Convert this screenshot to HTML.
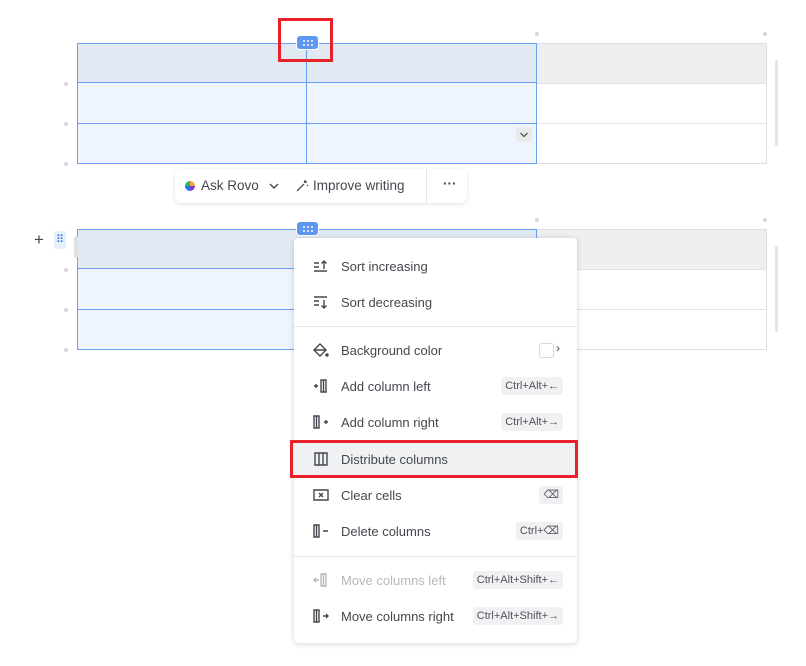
<!DOCTYPE html>
<html><head><style>
body{margin:0;width:806px;height:666px;background:#fff;font-family:"Liberation Sans",sans-serif;position:relative;overflow:hidden}
.a{position:absolute}
.dot{position:absolute;width:4px;height:4px;border-radius:50%;background:#d4d6da}
.mi{position:absolute;left:0;width:283px;height:36px;font-size:13px;color:#44474e}
.mi span.t{position:absolute;left:47px;top:11px}
.mi svg{position:absolute;left:19px;top:10px}
.kb{position:absolute;right:14px;top:9px;height:18px;background:#f0f1f2;border-radius:3px;font-size:11px;color:#505258;line-height:18px;padding:0 4px}
.hd{position:absolute;width:23px;height:15px;background:#5d97f0;border-radius:4px;border:1px solid #fff;box-sizing:border-box}
.hd i{position:absolute;width:2px;height:2px;background:#fff;border-radius:1px}
</style></head><body>
<!-- Table 1 -->
<div class="a" style="left:77px;top:43px;width:690px;height:121px;border:1px solid #dcdee2;box-sizing:border-box"></div>
<div class="a" style="left:537px;top:44px;width:229px;height:39px;background:#eeeff1"></div>
<div class="a" style="left:537px;top:123px;width:229px;height:1px;background:#e2e3e6"></div>
<div class="a" style="left:537px;top:83px;width:229px;height:1px;background:#e2e3e6"></div>
<div class="a" style="left:77px;top:43px;width:460px;height:121px;background:#eef5fe;border:1px solid #6a9ff2;box-sizing:border-box"></div>
<div class="a" style="left:78px;top:44px;width:458px;height:39px;background:#e1e9f3"></div>
<div class="a" style="left:77px;top:82px;width:460px;height:1px;background:#6a9ff2"></div>
<div class="a" style="left:77px;top:123px;width:460px;height:1px;background:#6a9ff2"></div>
<div class="a" style="left:306px;top:43px;width:1px;height:121px;background:#6a9ff2"></div>
<div class="a" style="left:516px;top:127px;width:16px;height:15px;background:#e9eaec;border-radius:3px"><svg width="16" height="15" viewBox="0 0 16 15" fill="none" stroke="#555" stroke-width="1.3"><path d="M4.5 6l3.5 3.5L11.5 6"/></svg></div>
<div class="hd" style="left:296px;top:35px"><i style="left:6px;top:4px"></i><i style="left:10px;top:4px"></i><i style="left:14px;top:4px"></i><i style="left:6px;top:8px"></i><i style="left:10px;top:8px"></i><i style="left:14px;top:8px"></i></div>
<div class="a" style="left:278px;top:18px;width:55px;height:44px;border:3px solid #e8202a;box-sizing:border-box"></div>
<div class="dot" style="left:64px;top:82px"></div><div class="dot" style="left:64px;top:122px"></div><div class="dot" style="left:64px;top:162px"></div>
<div class="dot" style="left:535px;top:32px"></div><div class="dot" style="left:763px;top:32px"></div>
<div class="a" style="left:775px;top:60px;width:3px;height:86px;background:#e3e4e6;border-radius:2px"></div>
<!-- toolbar -->
<div class="a" style="left:175px;top:169px;width:292px;height:34px;background:#fff;border-radius:6px;box-shadow:0 1px 4px rgba(0,0,0,.12);font-size:13.5px;color:#44474e">
<div class="a" style="left:10px;top:12px;width:10px;height:10px;border-radius:50%;background:conic-gradient(#f5a623 0 25%,#7b3fd6 0 50%,#1e7ef0 0 75%,#2fb36a 0)"></div>
<span class="a" style="left:26px;top:9px">Ask Rovo</span>
<svg class="a" style="left:93px;top:12px" width="12" height="10" viewBox="0 0 12 10" fill="none" stroke="#44474e" stroke-width="1.4"><path d="M2 3l4 4 4-4"/></svg>
<svg class="a" style="left:120px;top:10px" width="14" height="14" viewBox="0 0 14 14" fill="none" stroke="#555" stroke-width="1.4"><path d="M2 12 9 5M10 1v3M12 3H9M12 6l1 1"/></svg>
<span class="a" style="left:138px;top:9px">Improve writing</span>
<div class="a" style="left:251px;top:0;width:1px;height:34px;background:#e4e5e7"></div>
<span class="a" style="left:268px;top:7px;font-weight:bold">···</span>
</div>
<!-- Table 2 -->
<div class="a" style="left:77px;top:229px;width:690px;height:121px;border:1px solid #dcdee2;box-sizing:border-box"></div>
<div class="a" style="left:537px;top:230px;width:229px;height:39px;background:#eeeff1"></div>
<div class="a" style="left:537px;top:269px;width:229px;height:1px;background:#e2e3e6"></div>
<div class="a" style="left:537px;top:309px;width:229px;height:1px;background:#e2e3e6"></div>
<div class="a" style="left:77px;top:229px;width:460px;height:121px;background:#eef5fe;border:1px solid #6a9ff2;box-sizing:border-box"></div>
<div class="a" style="left:78px;top:230px;width:458px;height:39px;background:#e1e9f3"></div>
<div class="a" style="left:77px;top:268px;width:460px;height:1px;background:#6a9ff2"></div>
<div class="a" style="left:77px;top:309px;width:460px;height:1px;background:#6a9ff2"></div>
<div class="hd" style="left:296px;top:221px"><i style="left:6px;top:4px"></i><i style="left:10px;top:4px"></i><i style="left:14px;top:4px"></i><i style="left:6px;top:8px"></i><i style="left:10px;top:8px"></i><i style="left:14px;top:8px"></i></div>
<div class="a" style="left:34px;top:230px;font-size:17px;color:#44474e">+</div>
<div class="a" style="left:54px;top:231px;width:12px;height:18px;background:#e6effd;border-radius:3px;color:#2f6fe0;font-size:11px;text-align:center;line-height:18px">⠿</div>
<div class="a" style="left:74px;top:236px;width:4px;height:22px;background:#e0e1e3;border-radius:2px"></div>
<div class="dot" style="left:64px;top:268px"></div><div class="dot" style="left:64px;top:308px"></div><div class="dot" style="left:64px;top:348px"></div>
<div class="dot" style="left:535px;top:218px"></div><div class="dot" style="left:763px;top:218px"></div>
<div class="a" style="left:775px;top:246px;width:3px;height:86px;background:#e3e4e6;border-radius:2px"></div>
<!-- Menu -->
<div class="a" style="left:294px;top:238px;width:283px;height:405px;background:#fff;border-radius:4px;box-shadow:0 1px 6px rgba(0,0,0,.18)">
<div class="mi" style="top:10px"><svg width="16" height="16" viewBox="0 0 16 16" fill="none" stroke="#44474e" stroke-width="1.4"><path d="M1 5h5M1 9h5M1 13h13M11 11V3M8.5 5.5 11 3l2.5 2.5"/></svg><span class="t">Sort increasing</span></div>
<div class="mi" style="top:46px"><svg width="16" height="16" viewBox="0 0 16 16" fill="none" stroke="#44474e" stroke-width="1.4"><path d="M1 3h13M1 7h5M1 11h5M11 6v8M8.5 11.5 11 14l2.5-2.5"/></svg><span class="t">Sort decreasing</span></div>
<div class="a" style="left:0;top:88px;width:283px;height:1px;background:#e4e5e7"></div>
<div class="mi" style="top:94px"><svg width="16" height="16" viewBox="0 0 16 16" fill="none" stroke="#44474e" stroke-width="1.4"><path d="M7 2 13 8 7 14 1 8Z M1 8h12"/><circle cx="14" cy="13" r="1" fill="#44474e"/></svg><span class="t">Background color</span>
<div class="a" style="left:245px;top:11px;width:13px;height:13px;border:1px solid #d6d8dc;border-radius:3px"></div><span class="a" style="left:262px;top:9px;font-size:12px">›</span></div>
<div class="mi" style="top:130px"><svg width="16" height="16" viewBox="0 0 16 16" fill="none" stroke="#44474e" stroke-width="1.4"><path d="M1 8h4M3 6v4M8 2h5v12H8ZM10.5 2v12"/></svg><span class="t">Add column left</span><span class="kb">Ctrl+Alt+←</span></div>
<div class="mi" style="top:166px"><svg width="16" height="16" viewBox="0 0 16 16" fill="none" stroke="#44474e" stroke-width="1.4"><path d="M1 2h5v12H1ZM3.5 2v12M11 8h4M13 6v4"/></svg><span class="t">Add column right</span><span class="kb">Ctrl+Alt+→</span></div>
<div class="mi" style="top:203px;background:#f0f1f2"><svg width="16" height="16" viewBox="0 0 16 16" fill="none" stroke="#44474e" stroke-width="1.4"><path d="M2 2h12v12H2ZM6 2v12M10 2v12"/></svg><span class="t">Distribute columns</span></div>
<div class="mi" style="top:239px"><svg width="16" height="16" viewBox="0 0 16 16" fill="none" stroke="#44474e" stroke-width="1.4"><path d="M1 3h14v10H1ZM6 6l4 4M10 6l-4 4"/></svg><span class="t">Clear cells</span><span class="kb">⌫</span></div>
<div class="mi" style="top:275px"><svg width="16" height="16" viewBox="0 0 16 16" fill="none" stroke="#44474e" stroke-width="1.4"><path d="M1 2h5v12H1ZM3.5 2v12M10 8h5"/></svg><span class="t">Delete columns</span><span class="kb">Ctrl+⌫</span></div>
<div class="a" style="left:0;top:318px;width:283px;height:1px;background:#e4e5e7"></div>
<div class="mi" style="top:324px;color:#b6b8bd"><svg width="16" height="16" viewBox="0 0 16 16" fill="none" stroke="#b6b8bd" stroke-width="1.4"><path d="M1 8h5M3 6 1 8l2 2M8 2h5v12H8ZM10.5 2v12"/></svg><span class="t">Move columns left</span><span class="kb">Ctrl+Alt+Shift+←</span></div>
<div class="mi" style="top:360px"><svg width="16" height="16" viewBox="0 0 16 16" fill="none" stroke="#44474e" stroke-width="1.4"><path d="M1 2h5v12H1ZM3.5 2v12M10 8h5M13 6l2 2-2 2"/></svg><span class="t">Move columns right</span><span class="kb">Ctrl+Alt+Shift+→</span></div>
</div>
<div class="a" style="left:290px;top:440px;width:288px;height:38px;border:3px solid #e8202a;box-sizing:border-box"></div>
</body></html>
